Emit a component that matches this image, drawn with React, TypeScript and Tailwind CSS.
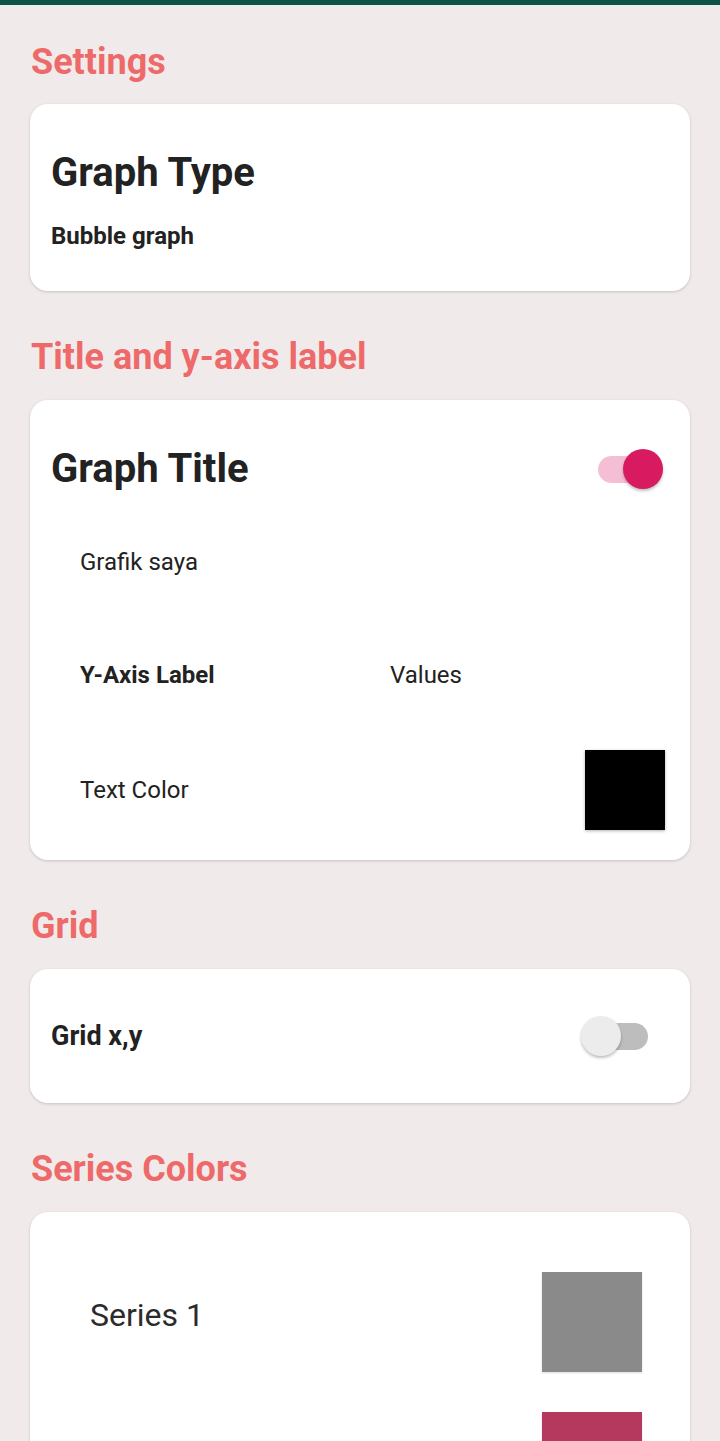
import React from 'react'

function Toggle({ on }: { on: boolean }) {
  return (
    <div className="relative w-[82px] h-[40px] flex-shrink-0">
      <div
        className={`absolute left-[17px] top-[7px] w-[50px] h-[27px] rounded-full ${on ? 'bg-[#f4bfd4]' : 'bg-[#bdbdbd]'}`}
      />
      <div
        className={`absolute top-0 w-[40px] h-[40px] rounded-full shadow-[0_2px_3px_rgba(0,0,0,0.25)] ${on ? 'left-[42px] bg-[#d81b60]' : 'left-0 bg-[#ececec]'}`}
      />
    </div>
  )
}

function SectionTitle({ children }: { children: React.ReactNode }) {
  return <h2 className="text-[36px] leading-[40px] font-bold text-[#ee6a6a] pl-px">{children}</h2>
}

function Card({ className, children }: { className?: string; children: React.ReactNode }) {
  return (
    <div className={`bg-white rounded-[18px] shadow-[0_1px_3px_rgba(0,0,0,0.18)] ${className ?? ''}`}>
      {children}
    </div>
  )
}

export default function App() {
  return (
    <div className="h-[1441px] bg-[#f1eaea] font-['Roboto',sans-serif] text-[#222] overflow-hidden">
      <div className="h-[5px] bg-[#0b5446]" />
      <div className="px-[30px]">
        {/* Settings */}
        <div className="pt-[37px]">
          <SectionTitle>Settings</SectionTitle>
        </div>
        <Card className="mt-[22px] pl-[21px] pt-[45px] pb-[40px]">
          <p className="text-[40px] leading-[48px] font-bold">Graph Type</p>
          <p className="mt-[24px] text-[24px] leading-[30px] font-bold">Bubble graph</p>
        </Card>

        {/* Title and y-axis label */}
        <div className="mt-[46px]">
          <SectionTitle>Title and y-axis label</SectionTitle>
        </div>
        <Card className="mt-[23px] pt-[45px] pb-[30px]">
          <div className="flex items-center justify-between pl-[21px] pr-[27px]">
            <p className="text-[40px] leading-[48px] font-bold">Graph Title</p>
            <Toggle on />
          </div>
          <p className="mt-[54px] pl-[50px] text-[24px] leading-[30px]">Grafik saya</p>
          <div className="mt-[83px] pl-[50px] flex items-center text-[24px] leading-[30px]">
            <span className="w-[310px] font-bold">Y-Axis Label</span>
            <span>Values</span>
          </div>
          <div className="mt-[60px] pl-[50px] pr-[25px] flex items-center justify-between">
            <span className="text-[24px] leading-[30px]">Text Color</span>
            <div className="w-[80px] h-[80px] bg-black shadow-[0_1px_3px_rgba(0,0,0,0.3)]" />
          </div>
        </Card>

        {/* Grid */}
        <div className="mt-[46px]">
          <SectionTitle>Grid</SectionTitle>
        </div>
        <Card className="mt-[23px] h-[134px] pl-[21px] pr-[27px] flex items-center justify-between">
          <p className="text-[27px] leading-[32px] font-bold">Grid x,y</p>
          <Toggle on={false} />
        </Card>

        {/* Series Colors */}
        <div className="mt-[46px]">
          <SectionTitle>Series Colors</SectionTitle>
        </div>
        <Card className="mt-[23px] pt-[60px] pl-[60px] pr-[48px] pb-[40px]">
          <div className="flex items-center justify-between">
            <span className="text-[32px] leading-[38px] text-[#2b2b2b] -mt-[14px]">Series 1</span>
            <div className="w-[100px] h-[100px] bg-[#8a8a8a] shadow-[0_1px_2px_rgba(0,0,0,0.15)]" />
          </div>
          <div className="mt-[40px] flex items-center justify-end">
            <div className="w-[100px] h-[100px] bg-[#b5385f] shadow-[0_1px_2px_rgba(0,0,0,0.15)]" />
          </div>
        </Card>
      </div>
    </div>
  )
}
